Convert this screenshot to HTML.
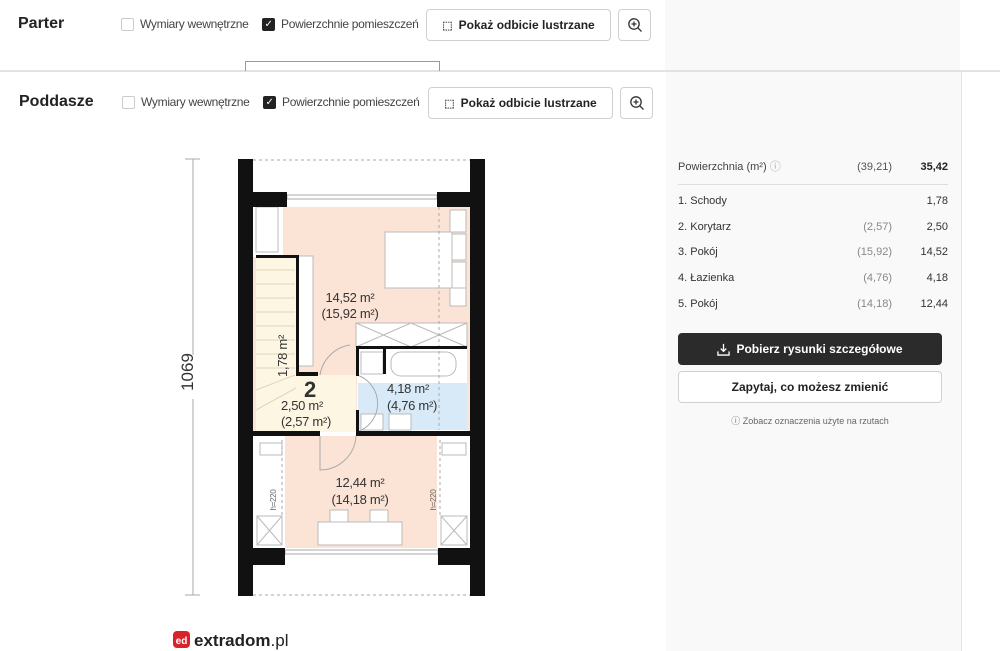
<!DOCTYPE html>
<html><head><meta charset="utf-8"><style>
*{box-sizing:border-box;margin:0;padding:0}
body{width:1000px;height:651px;overflow:hidden;background:#fff;font-family:"Liberation Sans",sans-serif;color:#222;position:relative}
.abs{position:absolute}
.title{font-size:16px;font-weight:bold;color:#222}
.cb{font-size:12px;color:#444;display:flex;align-items:center;gap:6px;letter-spacing:-0.3px}
.box{width:13px;height:13px;border:1px solid #ccc;border-radius:2px;background:#fff}
.box.on{background:#222;border-color:#222;color:#fff;font-size:10px;line-height:11px;text-align:center}
.btn{border:1px solid #d0d0d0;border-radius:4px;background:#fff;font-size:12px;font-weight:bold;display:flex;align-items:center;justify-content:center;gap:6px;color:#222}
.row{position:absolute;left:678px;width:270px;height:14px;font-size:11px;color:#333;line-height:14px}
.row .p{position:absolute;top:0;right:56px;color:#888}
.row .v{position:absolute;top:0;right:0}
</style></head><body>
<div class="abs" style="left:665px;top:0;width:295px;height:70px;background:#f9f9f9"></div>
<div class="abs" style="left:0;top:70px;width:1000px;height:2px;background:#e2e2e2"></div>
<div class="abs" style="left:666px;top:72px;width:296px;height:579px;background:#f9f9f9;border-right:1px solid #e6e6e6"></div>

<div class="abs title" style="left:18px;top:15px">Parter</div>
<div class="abs cb" style="left:121px;top:17px"><div class="box"></div>Wymiary wewnętrzne</div>
<div class="abs cb" style="left:262px;top:17px"><div class="box on">✓</div>Powierzchnie pomieszczeń</div>
<div class="abs btn" style="left:426px;top:9px;width:185px;height:32px"><span style="font-size:11px;color:#555">⬚</span>Pokaż odbicie lustrzane</div>
<div class="abs btn" style="left:618px;top:9px;width:33px;height:32px"><svg width="16" height="16" viewBox="0 0 16 16" fill="none" stroke="#333" stroke-width="1.3"><circle cx="7" cy="7" r="5.2"/><path d="M7 4.5v5M4.5 7h5M11 11l3.5 3.5"/></svg></div>
<div class="abs" style="left:245px;top:61px;width:195px;height:10px;border:1px solid #999;border-bottom:none"></div>

<div class="abs title" style="left:19px;top:93px">Poddasze</div>
<div class="abs cb" style="left:122px;top:95px"><div class="box"></div>Wymiary wewnętrzne</div>
<div class="abs cb" style="left:263px;top:95px"><div class="box on">✓</div>Powierzchnie pomieszczeń</div>
<div class="abs btn" style="left:428px;top:87px;width:185px;height:32px"><span style="font-size:11px;color:#555">⬚</span>Pokaż odbicie lustrzane</div>
<div class="abs btn" style="left:620px;top:87px;width:33px;height:32px"><svg width="16" height="16" viewBox="0 0 16 16" fill="none" stroke="#333" stroke-width="1.3"><circle cx="7" cy="7" r="5.2"/><path d="M7 4.5v5M4.5 7h5M11 11l3.5 3.5"/></svg></div>

<svg class="abs" style="left:0;top:0" width="666" height="651" font-family="Liberation Sans, sans-serif">
<line x1="193" y1="159" x2="193" y2="595" stroke="#aaa"/>
<line x1="185" y1="159" x2="200" y2="159" stroke="#aaa"/>
<line x1="185" y1="595" x2="200" y2="595" stroke="#aaa"/>
<rect x="183" y="355" width="20" height="44" fill="#fff"/>
<text x="199" y="378" font-size="17" fill="#333" text-anchor="middle" transform="rotate(-90 193 378)">1069</text>
<rect x="253" y="207" width="217" height="225" fill="#fbe3d6"/>
<rect x="253" y="207" width="30" height="50" fill="#fff"/>
<rect x="256" y="256" width="40" height="176" fill="#fdf6e3"/>
<rect x="296" y="375" width="60" height="57" fill="#fdf6e3"/>
<rect x="357" y="347" width="110" height="85" fill="#fff"/>
<rect x="358" y="383" width="109" height="47" fill="#d8eaf8"/>
<rect x="253" y="436" width="217" height="112" fill="#fbe3d6"/>
<rect x="253" y="436" width="32" height="112" fill="#fff"/>
<rect x="437" y="436" width="33" height="112" fill="#fff"/>
<g stroke="#e0d6bc" stroke-width="1">
<line x1="256" y1="270" x2="295" y2="270"/><line x1="256" y1="284" x2="295" y2="284"/><line x1="256" y1="298" x2="295" y2="298"/><line x1="256" y1="312" x2="295" y2="312"/><line x1="256" y1="326" x2="295" y2="326"/><line x1="256" y1="340" x2="295" y2="340"/><line x1="256" y1="354" x2="295" y2="354"/><line x1="256" y1="368" x2="295" y2="368"/><line x1="256" y1="390" x2="295" y2="375"/><line x1="256" y1="410" x2="296" y2="388"/>
</g>
<g fill="#fff" stroke="#bbb" stroke-width="1">
<rect x="385" y="232" width="67" height="56"/><rect x="452" y="234" width="14" height="26"/><rect x="452" y="262" width="14" height="26"/><rect x="450" y="210" width="16" height="22"/><rect x="450" y="288" width="16" height="18"/>
<rect x="298" y="256" width="15" height="110"/>
<rect x="356" y="323" width="111" height="24"/>
<rect x="391" y="352" width="65" height="24" rx="10"/>
<rect x="361" y="352" width="22" height="22"/>
<rect x="361" y="414" width="22" height="16"/><rect x="389" y="414" width="22" height="16"/>
<rect x="318" y="522" width="84" height="23"/><rect x="330" y="510" width="18" height="12"/><rect x="370" y="510" width="18" height="12"/>
<rect x="257" y="516" width="25" height="29"/><rect x="441" y="516" width="26" height="29"/>
<rect x="260" y="443" width="22" height="12"/><rect x="442" y="443" width="24" height="12"/>
<rect x="256" y="207" width="22" height="45"/>
</g>
<g stroke="#bbb"><line x1="356" y1="323" x2="411" y2="347"/><line x1="411" y1="323" x2="356" y2="347"/><line x1="411" y1="323" x2="467" y2="347"/><line x1="467" y1="323" x2="411" y2="347"/>
<line x1="257" y1="516" x2="282" y2="545"/><line x1="282" y1="516" x2="257" y2="545"/><line x1="441" y1="516" x2="467" y2="545"/><line x1="467" y1="516" x2="441" y2="545"/></g>
<g stroke="#aaa" stroke-dasharray="3 3"><line x1="253" y1="160" x2="470" y2="160"/><line x1="253" y1="595" x2="470" y2="595"/><line x1="439" y1="207" x2="439" y2="430"/><line x1="282" y1="440" x2="282" y2="515"/><line x1="440" y1="440" x2="440" y2="515"/></g>
<path d="M320 375 A 36 36 0 0 1 350 345" fill="none" stroke="#aaa"/>
<path d="M320 436 L320 470 A 36 36 0 0 0 356 436" fill="none" stroke="#aaa"/>
<path d="M357 375 A 30 30 0 0 1 357 432" fill="none" stroke="#aaa"/>
<g fill="#fff" stroke="#aaa"><rect x="287" y="195" width="150" height="4"/><rect x="285" y="550" width="153" height="4"/></g>
<g fill="#111">
<rect x="238" y="159" width="15" height="437"/><rect x="470" y="159" width="15" height="437"/>
<rect x="253" y="192" width="34" height="15"/><rect x="437" y="192" width="33" height="15"/>
<rect x="253" y="548" width="32" height="17"/><rect x="438" y="548" width="32" height="17"/>
<rect x="296" y="256" width="3" height="119"/><rect x="256" y="255" width="43" height="3"/>
<rect x="296" y="372" width="22" height="4"/>
<rect x="356" y="346" width="111" height="3"/><rect x="356" y="346" width="3" height="30"/>
<rect x="253" y="431" width="67" height="5"/><rect x="356" y="431" width="114" height="5"/>
<rect x="383" y="349" width="3" height="25"/><rect x="356" y="410" width="3" height="22"/>
</g>
<g fill="#333" text-anchor="middle" letter-spacing="-0.3">
<text x="350" y="302" font-size="13">14,52 m²</text><text x="350" y="318" font-size="13">(15,92 m²)</text>
<text x="310" y="397" font-size="22" font-weight="bold">2</text>
<text x="302" y="410" font-size="13">2,50 m²</text><text x="306" y="426" font-size="13">(2,57 m²)</text>
<text x="408" y="393" font-size="13">4,18 m²</text><text x="412" y="410" font-size="13">(4,76 m²)</text>
<text x="360" y="487" font-size="13">12,44 m²</text><text x="360" y="504" font-size="13">(14,18 m²)</text>
<text x="287" y="356" font-size="13" transform="rotate(-90 287 356)">1,78 m²</text>
<text x="276" y="500" font-size="8" fill="#666" transform="rotate(-90 276 500)">h=220</text>
<text x="436" y="500" font-size="8" fill="#666" transform="rotate(-90 436 500)">h=220</text>
</g>
<rect x="173" y="631" width="17" height="17" rx="4" fill="#d8232a"/>
<text x="181.5" y="644" font-size="10" font-weight="bold" fill="#fff" text-anchor="middle">ed</text>
<text x="194" y="646" font-size="17" font-weight="bold" fill="#222">extradom<tspan font-weight="normal">.pl</tspan></text>
</svg>

<div class="row" style="top:160px;color:#444">Powierzchnia (m²) <span style="color:#aaa">ⓘ</span><span class="p" style="color:#555">(39,21)</span><span class="v" style="font-weight:bold;color:#222">35,42</span></div>
<div class="abs" style="left:678px;top:184px;width:270px;height:1px;background:#ddd"></div>
<div class="row" style="top:194px">1. Schody<span class="v">1,78</span></div>
<div class="row" style="top:220px">2. Korytarz<span class="p">(2,57)</span><span class="v">2,50</span></div>
<div class="row" style="top:245px">3. Pokój<span class="p">(15,92)</span><span class="v">14,52</span></div>
<div class="row" style="top:271px">4. Łazienka<span class="p">(4,76)</span><span class="v">4,18</span></div>
<div class="row" style="top:297px">5. Pokój<span class="p">(14,18)</span><span class="v">12,44</span></div>
<div class="abs btn" style="left:678px;top:333px;width:264px;height:32px;background:#2b2b2b;border-color:#2b2b2b;color:#fff"><svg width="13" height="13" viewBox="0 0 14 14" fill="none" stroke="#fff" stroke-width="1.4"><path d="M7 1v8M4 6l3 3 3-3M1 9v4h12V9"/></svg>Pobierz rysunki szczegółowe</div>
<div class="abs btn" style="left:678px;top:371px;width:264px;height:32px">Zapytaj, co możesz zmienić</div>
<div class="abs" style="left:678px;top:414px;width:264px;text-align:center;font-size:9px;color:#666">ⓘ Zobacz oznaczenia użyte na rzutach</div>
</body></html>
